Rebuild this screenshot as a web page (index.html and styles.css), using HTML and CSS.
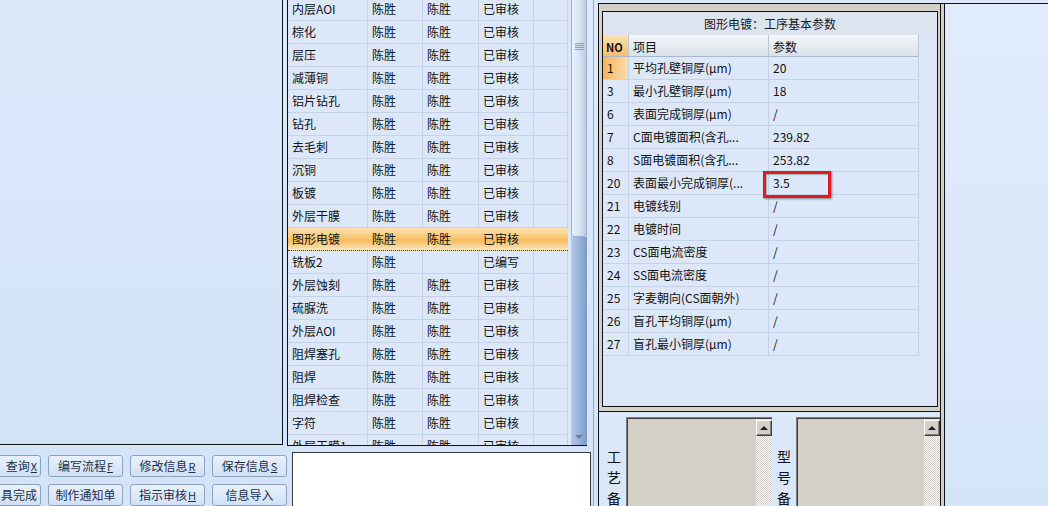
FILE: index.html
```html
<!DOCTYPE html>
<html lang="zh-CN">
<head>
<meta charset="utf-8">
<title>工序基本参数</title>
<link rel="stylesheet" href="styles.css">
</head>
<body>
<div class="app">
  <div class="left-col">
    <div class="left-panel"></div>
    <div class="btn-area">
      <div class="btn-row">
        <div class="btn clip">查询<u>X</u></div>
        <div class="btn">编写流程<u>F</u></div>
        <div class="btn">修改信息<u>R</u></div>
        <div class="btn">保存信息<u>S</u></div>
      </div>
      <div class="btn-row">
        <div class="btn clip">具完成</div>
        <div class="btn">制作通知单</div>
        <div class="btn">指示审核<u>H</u></div>
        <div class="btn">信息导入</div>
      </div>
    </div>
  </div>

  <div class="mid-col">
    <div class="grid">
      <div class="grid-body">
        <div class="rows">
          <div class="row"><span class="c1">内层AOI</span><span class="c2">陈胜</span><span class="c3">陈胜</span><span class="c4">已审核</span><span class="c5"></span></div>
          <div class="row"><span class="c1">棕化</span><span class="c2">陈胜</span><span class="c3">陈胜</span><span class="c4">已审核</span><span class="c5"></span></div>
          <div class="row"><span class="c1">层压</span><span class="c2">陈胜</span><span class="c3">陈胜</span><span class="c4">已审核</span><span class="c5"></span></div>
          <div class="row"><span class="c1">减薄铜</span><span class="c2">陈胜</span><span class="c3">陈胜</span><span class="c4">已审核</span><span class="c5"></span></div>
          <div class="row"><span class="c1">铝片钻孔</span><span class="c2">陈胜</span><span class="c3">陈胜</span><span class="c4">已审核</span><span class="c5"></span></div>
          <div class="row"><span class="c1">钻孔</span><span class="c2">陈胜</span><span class="c3">陈胜</span><span class="c4">已审核</span><span class="c5"></span></div>
          <div class="row"><span class="c1">去毛刺</span><span class="c2">陈胜</span><span class="c3">陈胜</span><span class="c4">已审核</span><span class="c5"></span></div>
          <div class="row"><span class="c1">沉铜</span><span class="c2">陈胜</span><span class="c3">陈胜</span><span class="c4">已审核</span><span class="c5"></span></div>
          <div class="row"><span class="c1">板镀</span><span class="c2">陈胜</span><span class="c3">陈胜</span><span class="c4">已审核</span><span class="c5"></span></div>
          <div class="row"><span class="c1">外层干膜</span><span class="c2">陈胜</span><span class="c3">陈胜</span><span class="c4">已审核</span><span class="c5"></span></div>
          <div class="row sel"><span class="c1">图形电镀</span><span class="c2">陈胜</span><span class="c3">陈胜</span><span class="c4">已审核</span><span class="c5"></span></div>
          <div class="row"><span class="c1">铣板2</span><span class="c2">陈胜</span><span class="c3"></span><span class="c4">已编写</span><span class="c5"></span></div>
          <div class="row"><span class="c1">外层蚀刻</span><span class="c2">陈胜</span><span class="c3">陈胜</span><span class="c4">已审核</span><span class="c5"></span></div>
          <div class="row"><span class="c1">硫脲洗</span><span class="c2">陈胜</span><span class="c3">陈胜</span><span class="c4">已审核</span><span class="c5"></span></div>
          <div class="row"><span class="c1">外层AOI</span><span class="c2">陈胜</span><span class="c3">陈胜</span><span class="c4">已审核</span><span class="c5"></span></div>
          <div class="row"><span class="c1">阻焊塞孔</span><span class="c2">陈胜</span><span class="c3">陈胜</span><span class="c4">已审核</span><span class="c5"></span></div>
          <div class="row"><span class="c1">阻焊</span><span class="c2">陈胜</span><span class="c3">陈胜</span><span class="c4">已审核</span><span class="c5"></span></div>
          <div class="row"><span class="c1">阻焊检查</span><span class="c2">陈胜</span><span class="c3">陈胜</span><span class="c4">已审核</span><span class="c5"></span></div>
          <div class="row"><span class="c1">字符</span><span class="c2">陈胜</span><span class="c3">陈胜</span><span class="c4">已审核</span><span class="c5"></span></div>
          <div class="row"><span class="c1">外层干膜1</span><span class="c2">陈胜</span><span class="c3">陈胜</span><span class="c4">已审核</span><span class="c5"></span></div>
        </div>
      </div>
      <div class="vscroll">
        <div class="thumb"><span class="grip"></span></div>
        <div class="track"><span class="arrow-down"></span></div>
      </div>
    </div>
    <div class="note"></div>
  </div>

  <div class="sash"></div>

  <div class="rgroup">
    <div class="pbox">
      <div class="ptitle">图形电镀：工序基本参数</div>
      <div class="phead">
        <span class="n">NO</span><span class="i">项目</span><span class="v">参数</span>
      </div>
      <div class="prow cur"><span class="n">1</span><span class="i">平均孔壁铜厚(μm)</span><span class="v">20</span></div>
      <div class="prow"><span class="n">3</span><span class="i">最小孔壁铜厚(μm)</span><span class="v">18</span></div>
      <div class="prow"><span class="n">6</span><span class="i">表面完成铜厚(μm)</span><span class="v">/</span></div>
      <div class="prow"><span class="n">7</span><span class="i">C面电镀面积(含孔...</span><span class="v">239.82</span></div>
      <div class="prow"><span class="n">8</span><span class="i">S面电镀面积(含孔...</span><span class="v">253.82</span></div>
      <div class="prow"><span class="n">20</span><span class="i">表面最小完成铜厚(...</span><span class="v">3.5</span></div>
      <div class="prow"><span class="n">21</span><span class="i">电镀线别</span><span class="v">/</span></div>
      <div class="prow"><span class="n">22</span><span class="i">电镀时间</span><span class="v">/</span></div>
      <div class="prow"><span class="n">23</span><span class="i">CS面电流密度</span><span class="v">/</span></div>
      <div class="prow"><span class="n">24</span><span class="i">SS面电流密度</span><span class="v">/</span></div>
      <div class="prow"><span class="n">25</span><span class="i">字麦朝向(CS面朝外)</span><span class="v">/</span></div>
      <div class="prow"><span class="n">26</span><span class="i">盲孔平均铜厚(μm)</span><span class="v">/</span></div>
      <div class="prow"><span class="n">27</span><span class="i">盲孔最小铜厚(μm)</span><span class="v">/</span></div>
      <div class="redmark"></div>
    </div>
    <div class="lower">
      <div class="lab lab1">工艺备</div>
      <div class="memo memo1"><div class="msb"><div class="mbtn"><span class="arrow-up"></span></div></div></div>
      <div class="lab lab2">型号备</div>
      <div class="memo memo2"><div class="msb"><div class="mbtn"><span class="arrow-up"></span></div></div></div>
    </div>
  </div>

  <div class="sash2"></div>
  <div class="far-right"></div>
</div>
</body>
</html>
```

FILE: styles.css
```css
* { box-sizing: border-box; }

body {
  margin: 0;
  width: 1048px;
  height: 506px;
  overflow: hidden;
  background: linear-gradient(#dde9fb, #d3e3f8);
  font: 12px "Noto Sans CJK SC", "Noto Sans", sans-serif;
  color: #111;
}

.app {
  display: flex;
  height: 506px;
}

/* left column */
.left-col {
  width: 287px;
  flex: none;
  overflow: hidden;
}
.left-panel {
  width: 283px;
  height: 445px;
  border-right: 1px solid #111;
  border-bottom: 1px solid #111;
  background: linear-gradient(#dce9fb, #d2e3f8);
}
.btn-area {
  padding-top: 10px;
  display: flex;
  flex-direction: column;
  gap: 7px;
}
.btn-row {
  display: flex;
  gap: 7px;
  margin-left: -34px;
}
.btn {
  flex: none;
  width: 75px;
  height: 22px;
  border: 1px solid #8aa3c4;
  border-radius: 3px;
  background: linear-gradient(#e9f1fc, #d0e1f6);
  display: flex;
  align-items: center;
  justify-content: center;
  color: #1c2f4f;
  line-height: 20px;
  white-space: nowrap;
}
.btn.clip {
  justify-content: flex-end;
  padding-right: 3px;
}
.btn u {
  font-size: 11px;
  margin-left: 1px;
}

/* middle column */
.mid-col {
  width: 307px;
  flex: none;
  border-right: 1px solid #9aa9bd;
  display: flex;
  flex-direction: column;
}
.grid {
  flex: none;
  width: 300px;
  height: 446px;
  border-left: 1px solid #111;
  border-bottom: 1px solid #111;
  display: flex;
  overflow: hidden;
}
.grid-body {
  width: 283px;
  flex: none;
  background: #dbe7f8;
  overflow: hidden;
}
.rows {
  margin-top: -2px;
}
.row {
  display: flex;
  width: 280px;
  height: 23px;
  border-bottom: 1px solid #c3d3ea;
  line-height: 22px;
  background: #dce8f9;
}
.row span {
  flex: none;
  padding-left: 4px;
  border-right: 1px solid #c3d3ea;
  white-space: nowrap;
  overflow: hidden;
}
.c1 { width: 80px; }
.c2 { width: 55px; }
.c3 { width: 56px; }
.c4 { width: 55px; }
.c5 { width: 34px; }
.row.sel {
  background: linear-gradient(#fde2ae, #f9c772 45%, #f7bb5c 55%, #fde6bb);
  border-bottom: 1px dotted #333;
}
.row.sel span { border-right-color: transparent; }

.vscroll {
  width: 16px;
  flex: none;
  display: flex;
  flex-direction: column;
}
.thumb {
  height: 237px;
  border: 1px solid #9bb0cd;
  border-top: none;
  border-radius: 0 0 3px 3px;
  background: linear-gradient(to right, #ecf2fb, #d6e2f2 55%, #b9cae3);
  display: flex;
  justify-content: center;
  padding-top: 43px;
}
.grip {
  width: 9px;
  height: 7px;
  background: repeating-linear-gradient(#8a9dba 0 1px, transparent 1px 2px);
}
.track {
  flex: 1;
  background: linear-gradient(to right, #b5c9e7, #94aed8 60%, #7c99ca);
  display: flex;
  align-items: flex-end;
  justify-content: center;
  padding-bottom: 6px;
}
.arrow-down {
  width: 0;
  height: 0;
  border-left: 4px solid transparent;
  border-right: 4px solid transparent;
  border-top: 4px solid #6a7c9c;
}
.note {
  flex: 1;
  width: 299px;
  margin: 6px 0 0 5px;
  background: #fff;
  border: 1px solid #3a3a3a;
  border-bottom: none;
}

.sash {
  width: 4px;
  flex: none;
}

/* right group */
.rgroup {
  width: 343px;
  flex: none;
  margin-top: 3px;
  border: 1px solid #111;
  border-bottom: none;
  background: #d4d0c8;
  padding: 7px 2px 0 3px;
  display: flex;
  flex-direction: column;
  overflow: hidden;
}
.pbox {
  position: relative;
  flex: none;
  width: 336px;
  height: 396px;
  border: 1px solid #111;
  background: #dbe7f8;
}
.ptitle {
  height: 23px;
  line-height: 23px;
  text-align: center;
  background: #dce4ef;
  color: #1a1a1a;
}
.phead, .prow {
  display: flex;
  width: 316px;
}
.phead {
  height: 22px;
}
.phead span {
  flex: none;
  padding: 3px 0 0 4px;
  line-height: 18px;
  background: linear-gradient(#f3f6fa, #dae1ea);
  border-right: 1px solid #b8c6d8;
  border-bottom: 1px solid #a9b9cd;
}
.phead .n {
  background: linear-gradient(#fde4b1, #f6bd68);
  font-size: 11px;
  font-weight: bold;
  padding-left: 3px;
}
.prow {
  height: 23px;
}
.prow span {
  flex: none;
  padding-left: 4px;
  line-height: 22px;
  border-right: 1px solid #c3d3ea;
  border-bottom: 1px solid #c3d3ea;
  white-space: nowrap;
  overflow: hidden;
  background: #dce8f9;
}
.n { width: 26px; }
.i { width: 140px; }
.v { width: 150px; }
.prow.cur .n {
  background: linear-gradient(to right, #f6b35d, #fddcab);
}
.redmark {
  position: absolute;
  left: 160px;
  top: 159px;
  width: 68px;
  height: 27px;
  border: 3px solid #e3191c;
  box-shadow: 1px 1px 2px rgba(0, 0, 0, 0.45), inset 1px 1px 1px rgba(0, 0, 0, 0.25);
}

.lower {
  flex: 1;
  margin: 4px -2px 0 -3px;
  border-top: 1px solid #111;
  background: #d9e7f9;
  padding-top: 5px;
  display: flex;
}
.lab {
  flex: none;
  writing-mode: vertical-lr;
  font-size: 14px;
  letter-spacing: 7px;
  padding-top: 33px;
  color: #111;
}
.lab1 {
  width: 27px;
  line-height: 25px;
  padding-left: 2px;
}
.lab2 {
  width: 24px;
  line-height: 24px;
}
.memo {
  flex: none;
  display: flex;
  justify-content: flex-end;
  background: #d4d0c8;
  border-top: 1px solid #7a7a7a;
  border-left: 1px solid #7a7a7a;
  box-shadow: inset 1px 1px #404040;
  padding-top: 1px;
}
.memo1 { width: 146px; }
.memo2 { width: 144px; }
.msb {
  width: 16px;
  background: repeating-conic-gradient(#d4d0c8 0 25%, #ffffff 0 50%) 0 0 / 2px 2px;
  padding-top: 1px;
}
.mbtn {
  height: 16px;
  background: #d4d0c8;
  border: 1px solid;
  border-color: #ffffff #404040 #404040 #ffffff;
  box-shadow: inset -1px -1px #808080;
  display: flex;
  align-items: center;
  justify-content: center;
}
.arrow-up {
  width: 0;
  height: 0;
  border-left: 4px solid transparent;
  border-right: 4px solid transparent;
  border-bottom: 4px solid #222;
}

.sash2 {
  width: 3px;
  flex: none;
  margin-top: 3px;
  border-top: 1px solid #111;
  background: #d4d0c8;
}
.far-right {
  flex: 1;
  margin-top: 3px;
  border-top: 1px solid #111;
  border-left: 1px solid #111;
  background: linear-gradient(#e0ecfb, #d5e5f9);
}
```
